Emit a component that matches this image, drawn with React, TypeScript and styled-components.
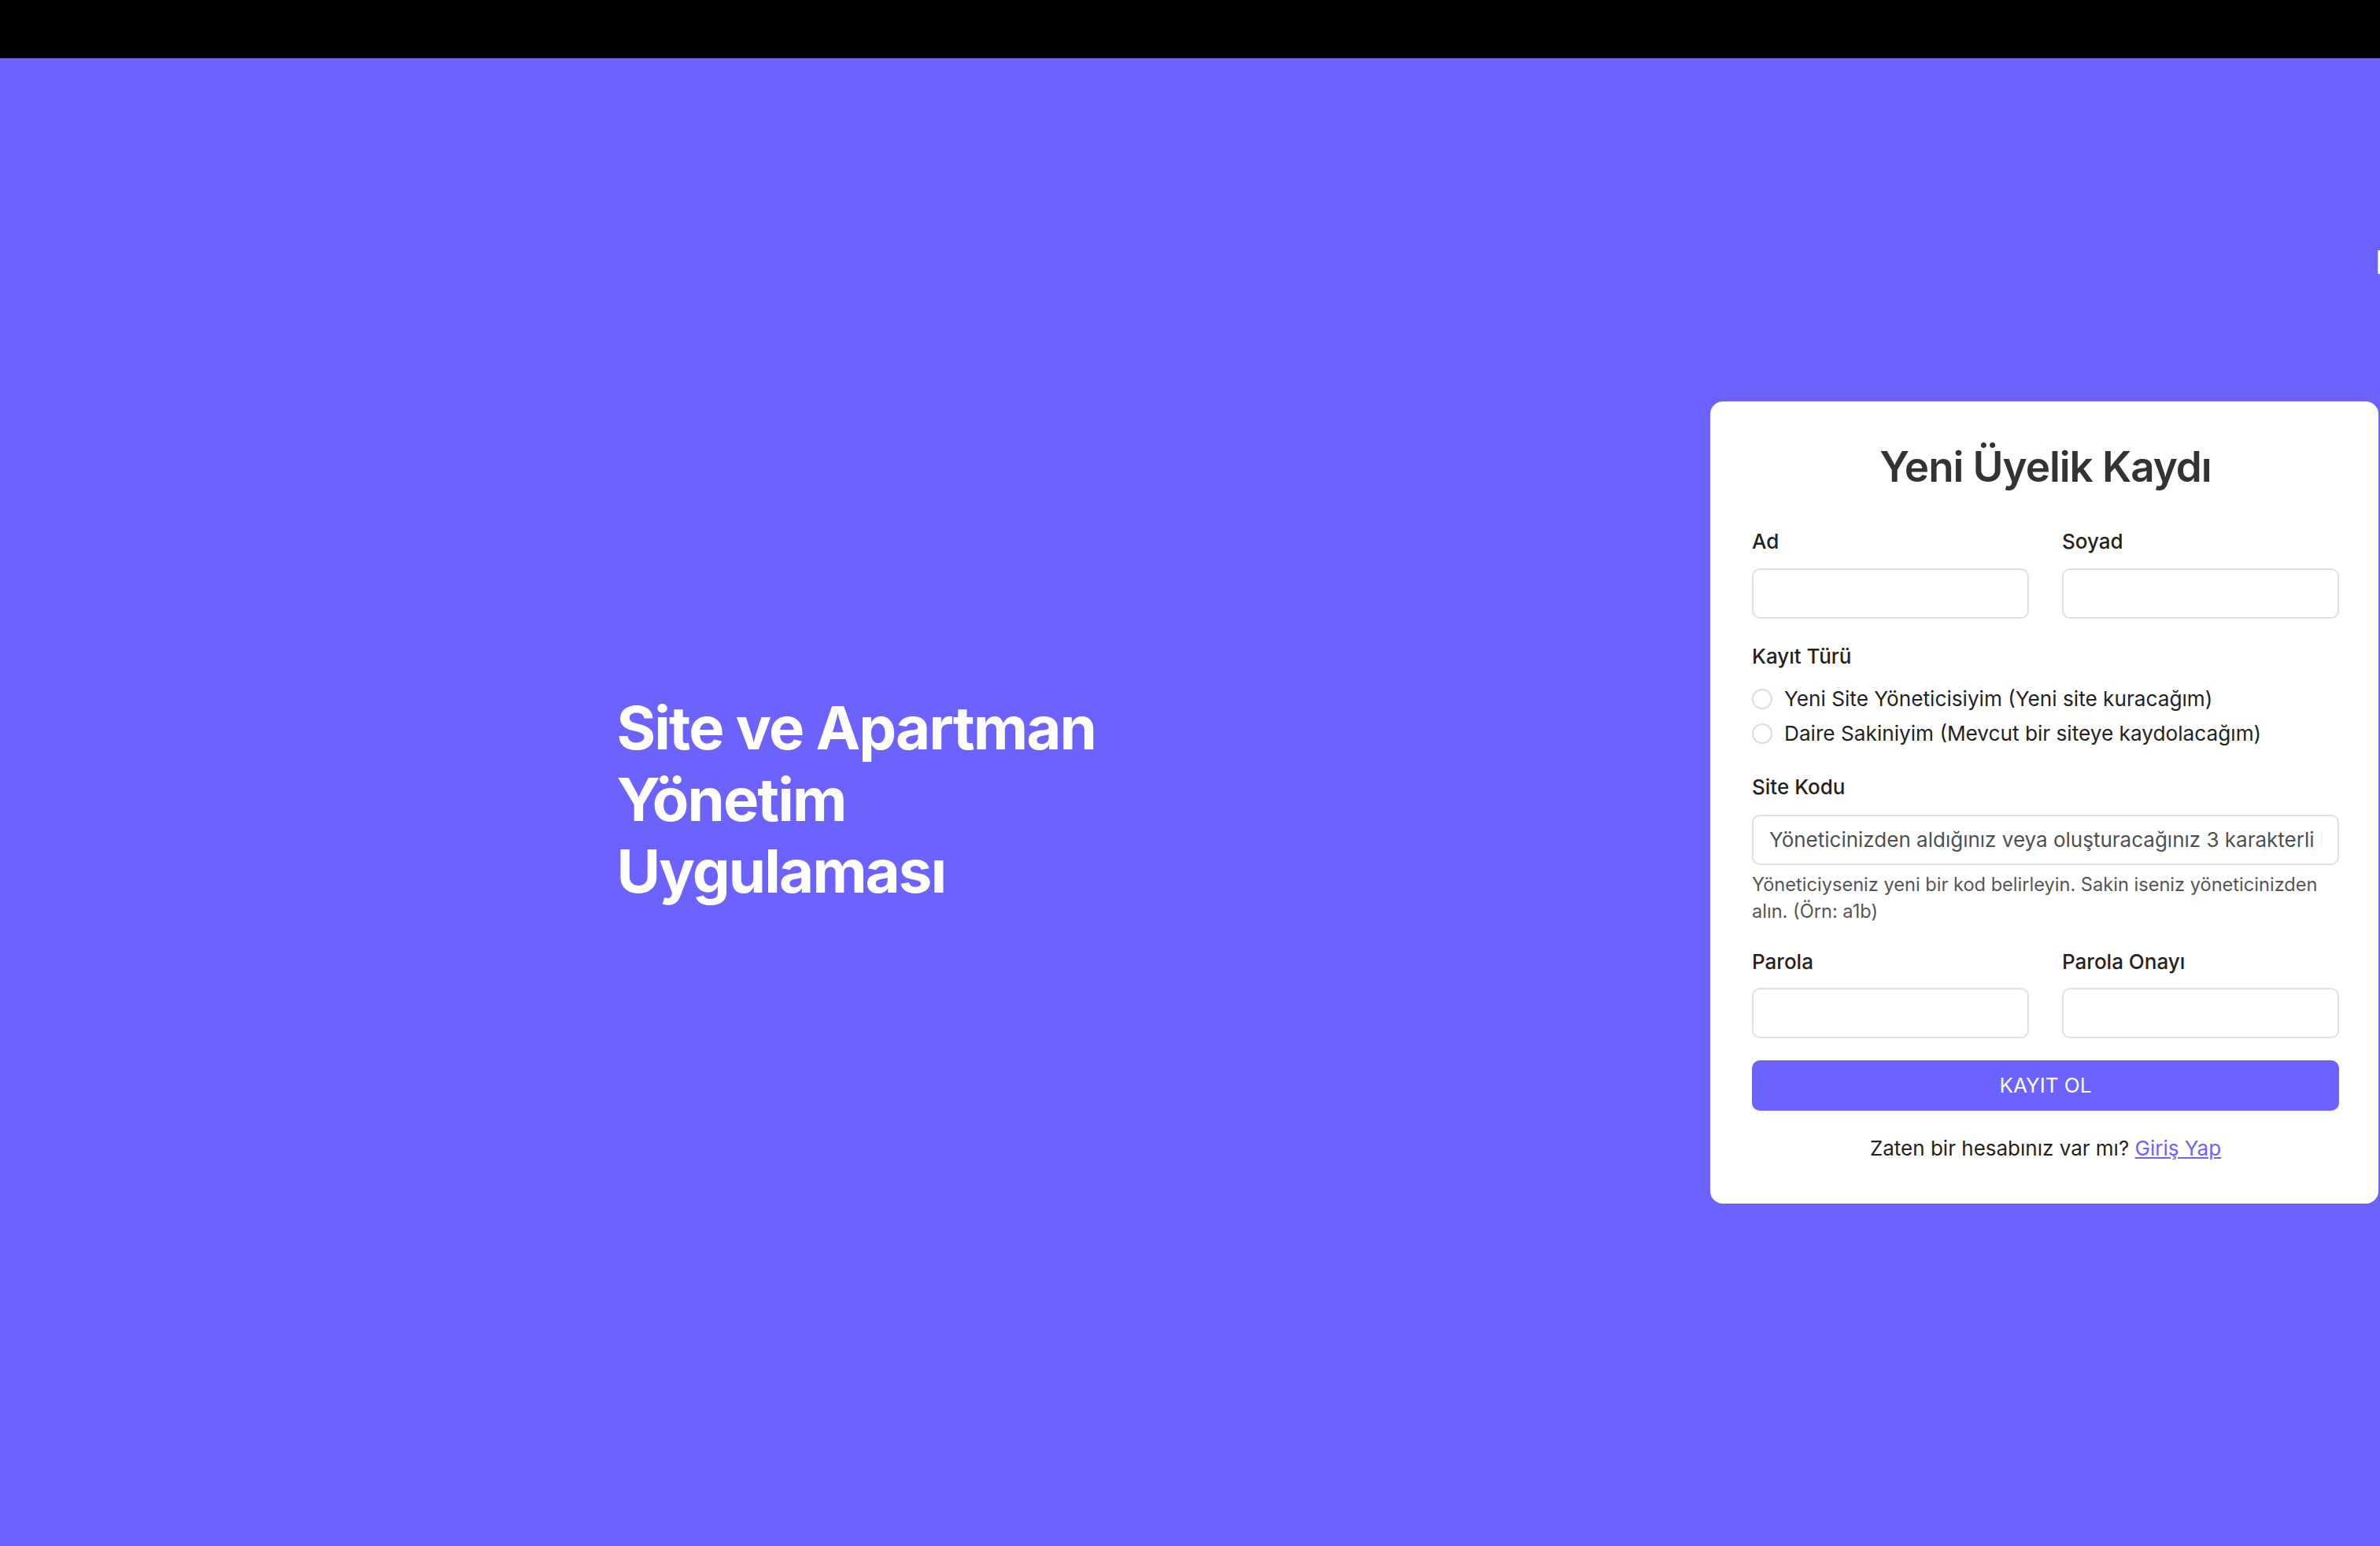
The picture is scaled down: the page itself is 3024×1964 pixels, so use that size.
import React from "react";
import styled, { createGlobalStyle } from "styled-components";

const GlobalStyle = createGlobalStyle`
  html, body, #root { margin: 0; padding: 0; height: 100%; }
  body { font-family: Inter, "Noto Sans", "Liberation Sans", sans-serif; }
  * { box-sizing: border-box; }
`;

const Page = styled.div`
  position: relative;
  min-height: 100vh;
  display: flex;
  flex-direction: column;
  overflow: hidden;
`;

const TopBar = styled.div`
  height: 74px;
  background: #000;
  flex: none;
`;

const Main = styled.main`
  flex: 1;
  background: #6c63ff;
  display: flex;
  align-items: center;
`;

const Hero = styled.section`
  flex: 1;
  display: flex;
  justify-content: center;
`;

const HeroTitle = styled.h1`
  width: 626px;
  margin: 0 0 8px 20px;
  color: #fff;
  font-size: 76px;
  line-height: 91px;
  font-weight: 700;
  letter-spacing: -0.025em;
`;

const Card = styled.div`
  flex: none;
  width: 849px;
  margin-right: 2px;
  background: #fff;
  border-radius: 16px;
  padding: 49px 50px 54px 53px;
  display: flex;
  flex-direction: column;
`;

const CardTitle = styled.h2`
  margin: 0 0 45px;
  text-align: center;
  font-size: 53px;
  line-height: 68px;
  font-weight: 600;
  color: #333;
  letter-spacing: -0.02em;
`;

const Row = styled.div`
  display: grid;
  grid-template-columns: 1fr 1fr;
  gap: 42px;
`;

const Field = styled.div<{ $mb?: number }>`
  display: flex;
  flex-direction: column;
  margin-bottom: ${(p) => p.$mb ?? 32}px;
`;

const Label = styled.label<{ $mb?: number }>`
  font-size: 26px;
  line-height: 32px;
  font-weight: 500;
  color: #222;
  margin-bottom: ${(p) => p.$mb ?? 18}px;
`;

const Input = styled.input`
  height: 64px;
  width: 100%;
  border: 2px solid #e0e0e0;
  border-radius: 10px;
  padding: 0 20px;
  font-family: inherit;
  font-size: 26px;
  color: #222;
  background: #fff;
  outline: none;
  &::placeholder { color: #505050; }
`;

const RadioList = styled.div`
  display: flex;
  flex-direction: column;
  gap: 12px;
`;

const RadioRow = styled.label`
  display: flex;
  align-items: center;
  gap: 15px;
  font-size: 26.2px;
  line-height: 32px;
  color: #222;
`;

const RadioCircle = styled.span`
  width: 26px;
  height: 26px;
  border-radius: 50%;
  border: 2px solid #dcdcdc;
  background: #fff;
  flex: none;
`;

const Help = styled.p`
  margin: 8px 0 0;
  font-size: 23.6px;
  line-height: 34px;
  color: #555;
`;

const Button = styled.button`
  height: 64px;
  width: 100%;
  border: none;
  border-radius: 10px;
  background: #6c63ff;
  color: #fff;
  font-family: inherit;
  font-size: 26px;
  font-weight: 400;
  margin: -4px 0 32px;
  cursor: pointer;
`;

const Footer = styled.p`
  margin: 0;
  text-align: center;
  font-size: 26px;
  line-height: 32px;
  color: #222;
`;

const Link = styled.a`
  color: #6c63ff;
  text-decoration: underline;
`;

const EdgeSliver = styled.div`
  position: absolute;
  right: 0;
  top: 318px;
  width: 3px;
  height: 30px;
  background: #fff;
  border-left: 1px solid #d8d8e8;
`;

export default function App() {
  return (
    <>
      <GlobalStyle />
      <Page>
        <TopBar />
        <Main>
          <Hero>
            <HeroTitle>Site ve Apartman Yönetim Uygulaması</HeroTitle>
          </Hero>
          <Card>
            <CardTitle>Yeni Üyelik Kaydı</CardTitle>
            <Row>
              <Field>
                <Label>Ad</Label>
                <Input type="text" />
              </Field>
              <Field>
                <Label>Soyad</Label>
                <Input type="text" />
              </Field>
            </Row>
            <Field $mb={36}>
              <Label $mb={22}>Kayıt Türü</Label>
              <RadioList>
                <RadioRow>
                  <RadioCircle />
                  Yeni Site Yöneticisiyim (Yeni site kuracağım)
                </RadioRow>
                <RadioRow>
                  <RadioCircle />
                  Daire Sakiniyim (Mevcut bir siteye kaydolacağım)
                </RadioRow>
              </RadioList>
            </Field>
            <Field $mb={31}>
              <Label $mb={19}>Site Kodu</Label>
              <Input
                type="text"
                placeholder="Yöneticinizden aldığınız veya oluşturacağınız 3 karakterli kod"
              />
              <Help>
                Yöneticiyseniz yeni bir kod belirleyin. Sakin iseniz yöneticinizden alın. (Örn: a1b)
              </Help>
            </Field>
            <Row>
              <Field>
                <Label $mb={17}>Parola</Label>
                <Input type="password" />
              </Field>
              <Field>
                <Label $mb={17}>Parola Onayı</Label>
                <Input type="password" />
              </Field>
            </Row>
            <Button>KAYIT OL</Button>
            <Footer>
              Zaten bir hesabınız var mı? <Link href="#">Giriş Yap</Link>
            </Footer>
          </Card>
        </Main>
        <EdgeSliver />
      </Page>
    </>
  );
}
